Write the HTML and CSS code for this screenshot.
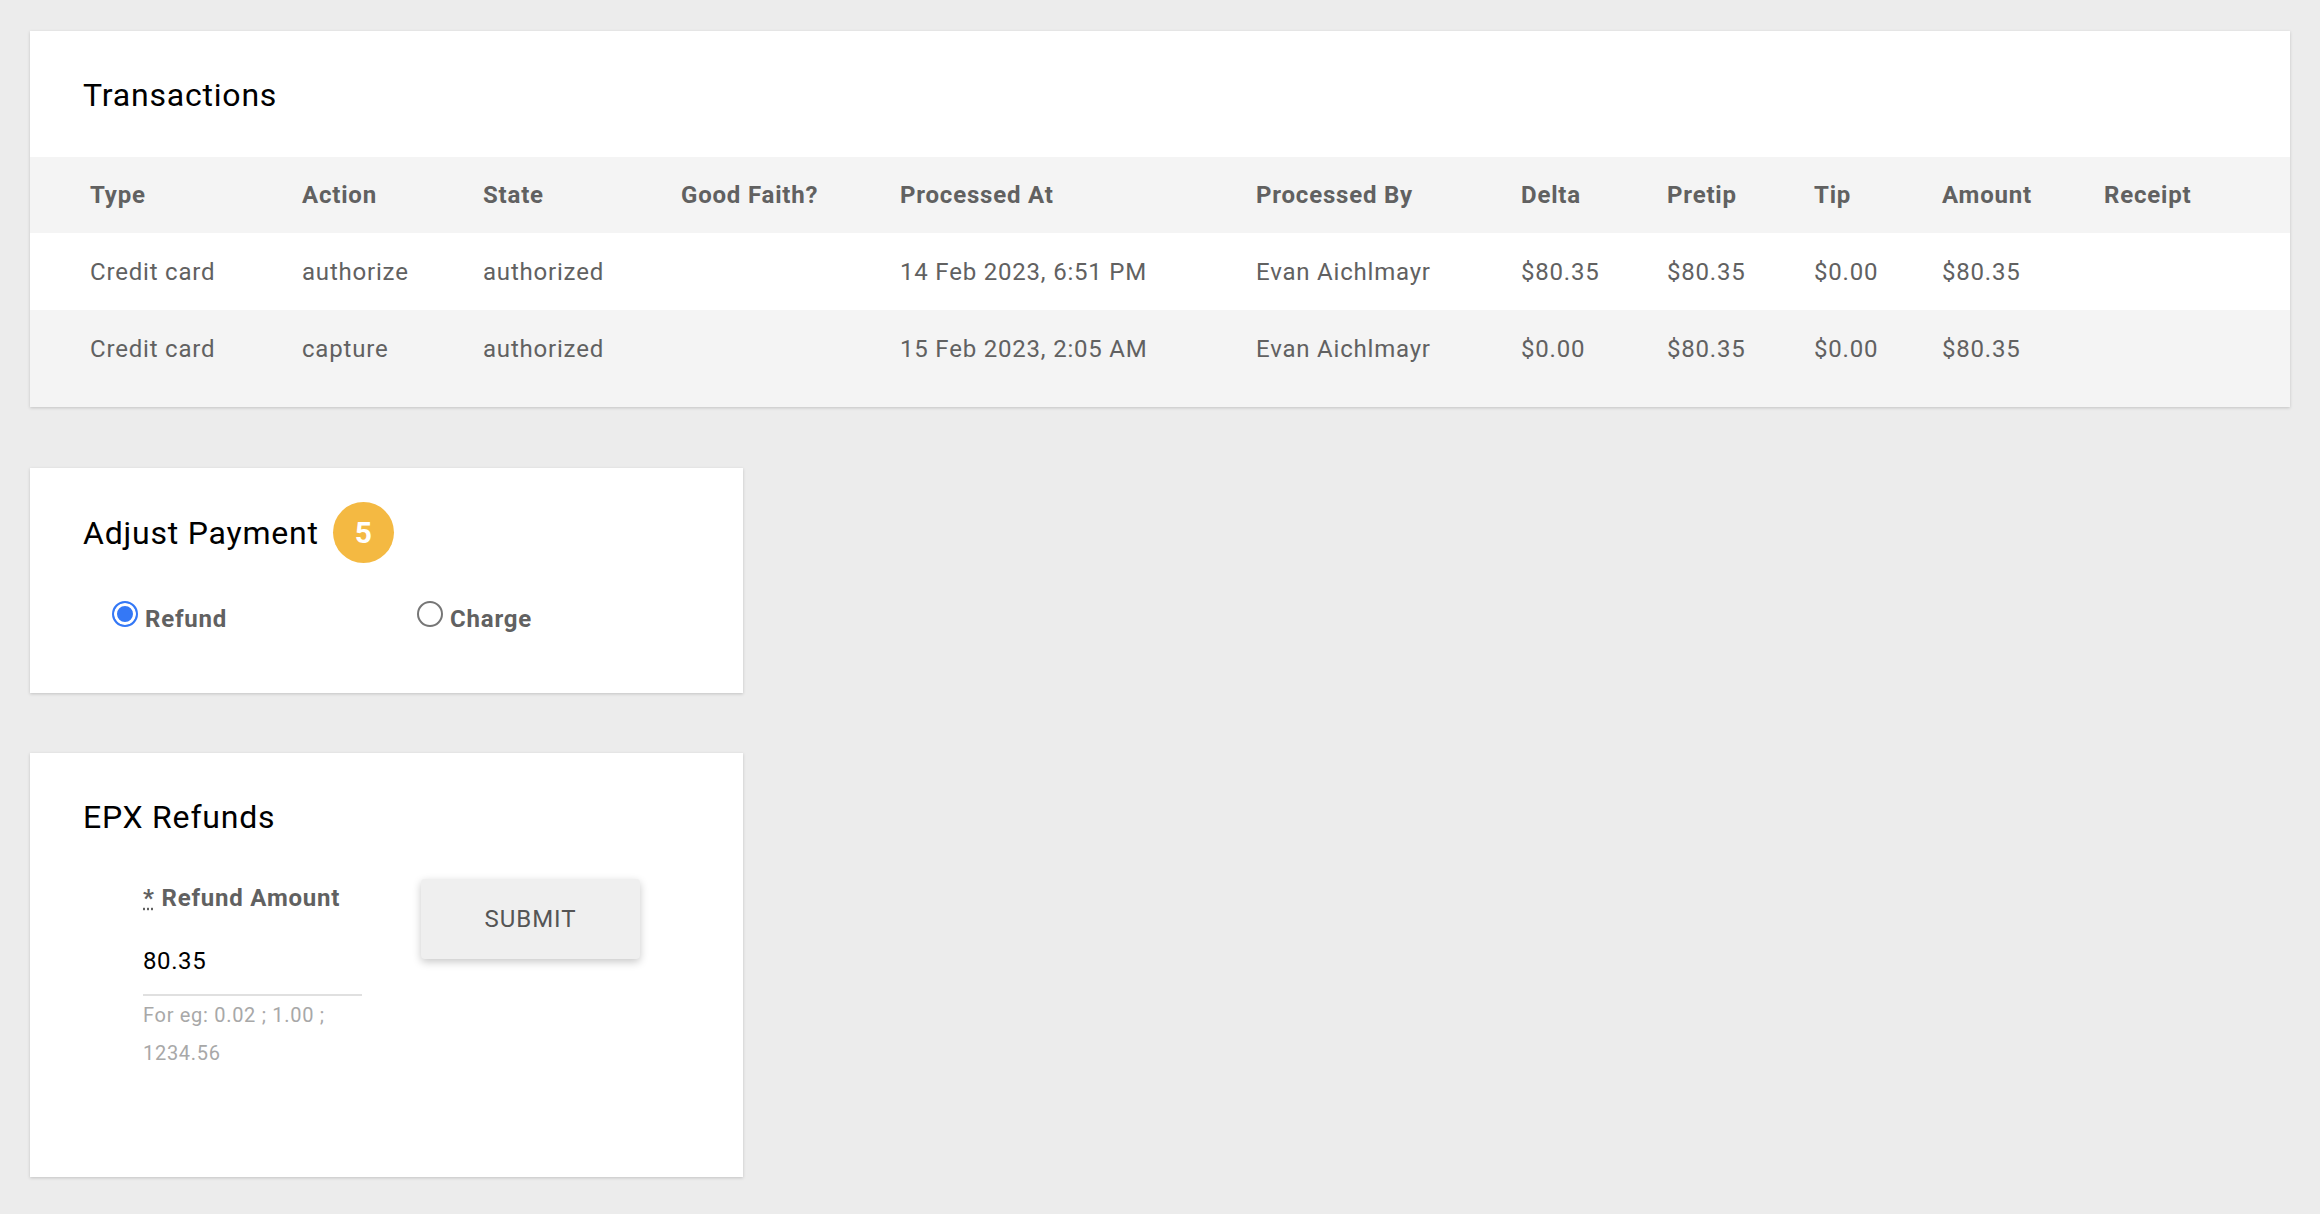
FILE: index.html
```html
<!DOCTYPE html>
<html lang="en">
<head>
	<meta charset="UTF-8">
	<meta name="viewport" content="width=device-width, initial-scale=1.0">
	<title>Payment</title>
	<link rel="stylesheet" href="styles.css">
</head>
<body>
	<div class="page">

	<section class="card card-wide">
		<h2 class="card-title">Transactions</h2>
		<div class="table-wrap">
		<table class="tx-table">
			<colgroup>
				<col style="width:272px">
				<col style="width:181px">
				<col style="width:198px">
				<col style="width:219px">
				<col style="width:356px">
				<col style="width:265px">
				<col style="width:146px">
				<col style="width:147px">
				<col style="width:128px">
				<col style="width:162px">
				<col>
			</colgroup>
			<thead>
				<tr>
					<th>Type</th>
					<th>Action</th>
					<th>State</th>
					<th>Good Faith?</th>
					<th>Processed At</th>
					<th>Processed By</th>
					<th>Delta</th>
					<th>Pretip</th>
					<th>Tip</th>
					<th>Amount</th>
					<th>Receipt</th>
				</tr>
			</thead>
			<tbody>
				<tr>
					<td>Credit card</td>
					<td>authorize</td>
					<td>authorized</td>
					<td></td>
					<td>14 Feb 2023, 6:51 PM</td>
					<td>Evan Aichlmayr</td>
					<td>$80.35</td>
					<td>$80.35</td>
					<td>$0.00</td>
					<td>$80.35</td>
					<td></td>
				</tr>
				<tr>
					<td>Credit card</td>
					<td>capture</td>
					<td>authorized</td>
					<td></td>
					<td>15 Feb 2023, 2:05 AM</td>
					<td>Evan Aichlmayr</td>
					<td>$0.00</td>
					<td>$80.35</td>
					<td>$0.00</td>
					<td>$80.35</td>
					<td></td>
				</tr>
			</tbody>
		</table>
		</div>
	</section>

	<section class="card card-adjust">
		<div class="title-row">
			<h2 class="card-title">Adjust Payment</h2>
			<span class="badge">5</span>
		</div>
		<div class="radio-group">
			<label class="option"><input type="radio" name="adjust" class="radio" checked><span>Refund</span></label>
			<label class="option"><input type="radio" name="adjust" class="radio"><span>Charge</span></label>
		</div>
	</section>

	<section class="card card-refund">
		<h2 class="card-title">EPX Refunds</h2>
		<div class="form-row">
			<div class="field">
				<label class="field-label"><abbr title="required">*</abbr> Refund Amount</label>
				<input type="text" class="field-input" value="80.35">
				<div class="field-help">For eg: 0.02 ; 1.00 ; 1234.56</div>
			</div>
			<button class="submit">SUBMIT</button>
		</div>
	</section>

	</div>
</body>
</html>
```

FILE: styles.css
```css
*{
	box-sizing: border-box;
	margin: 0px;
	padding: 0px;
}

body{
	background-color: #ececec;
	font-family: Roboto, "Noto Sans", Arial, sans-serif;
	letter-spacing: 0.8px;
}

.page{
	display: flex;
	flex-direction: column;
	align-items: flex-start;
	gap: 60px;
	padding: 31px 30px;
}

.card{
	background-color: #fff;
	box-shadow: 0 1px 3px rgba(0, 0, 0, 0.18);
}

.card-title{
	font-size: 32px;
	line-height: 38px;
	font-weight: 400;
	color: #000;
}

/* transactions */
.card-wide{
	width: 100%;
	padding-top: 45px;
	margin-bottom: 1px;
}

.card-wide .card-title{
	padding-left: 53px;
	margin-bottom: 43px;
}

.table-wrap{
	background-color: #f4f4f4;
	padding-bottom: 20px;
}

.tx-table{
	width: 100%;
	table-layout: fixed;
	border-collapse: collapse;
}

.tx-table th,
.tx-table td{
	height: 77px;
	padding: 0;
	text-align: left;
	vertical-align: middle;
	font-size: 24px;
	line-height: 28px;
	color: #616161;
	white-space: nowrap;
}

.tx-table th{
	height: 76px;
	font-weight: 700;
}

.tx-table th:first-child,
.tx-table td:first-child{
	padding-left: 60px;
}

.tx-table thead tr,
.tx-table tbody tr:nth-child(even){
	background-color: #f4f4f4;
}

.tx-table tbody tr:nth-child(odd){
	background-color: #fff;
}

/* adjust payment */
.card-adjust{
	width: 713px;
	padding: 34px 53px 60px;
}

.title-row{
	display: flex;
	align-items: center;
	gap: 14px;
	height: 61px;
}

.badge{
	display: flex;
	align-items: center;
	justify-content: center;
	width: 61px;
	height: 61px;
	border-radius: 50%;
	background-color: #f4b942;
	color: #fff;
	font-size: 30px;
	font-weight: 700;
	letter-spacing: 0;
}

.radio-group{
	display: grid;
	grid-template-columns: 305px auto;
	margin-top: 42px;
	padding-left: 29px;
}

.option{
	display: flex;
	align-items: flex-start;
	gap: 7px;
	font-size: 24px;
	line-height: 28px;
	font-weight: 700;
	color: #616161;
	cursor: pointer;
}

.radio{
	appearance: none;
	-webkit-appearance: none;
	flex: none;
	width: 26px;
	height: 26px;
	margin-top: -4px;
	border: 2px solid #767676;
	border-radius: 50%;
	background-color: #fff;
}

.radio:checked{
	border-color: #3478f6;
	background-color: #3478f6;
	box-shadow: inset 0 0 0 3px #fff;
}

/* refunds */
.card-refund{
	width: 713px;
	padding: 45px 53px 105px;
}

.form-row{
	display: flex;
	align-items: flex-start;
	gap: 59px;
	margin-top: 43px;
	padding-left: 60px;
}

.field{
	width: 219px;
	padding-top: 5px;
}

.field-label{
	display: block;
	font-size: 24px;
	line-height: 28px;
	font-weight: 700;
	color: #616161;
	white-space: nowrap;
}

.field-label abbr{
	text-decoration: underline dotted;
	cursor: help;
}

.field-input{
	display: block;
	width: 219px;
	margin-top: 35px;
	padding: 0 0 19px;
	border: none;
	border-bottom: 2px solid #e0e0e0;
	outline: none;
	background: transparent;
	font-family: inherit;
	font-size: 24px;
	line-height: 28px;
	letter-spacing: 0.6px;
	color: #000;
}

.field-help{
	font-size: 20px;
	line-height: 38px;
	letter-spacing: 0.7px;
	color: #a8a8a8;
}

.submit{
	width: 219px;
	height: 80px;
	border: none;
	border-radius: 4px;
	background-color: #efefef;
	box-shadow: 0 3px 8px rgba(0, 0, 0, 0.22);
	font-family: inherit;
	font-size: 24px;
	letter-spacing: 1px;
	color: #555;
	cursor: pointer;
}
```
